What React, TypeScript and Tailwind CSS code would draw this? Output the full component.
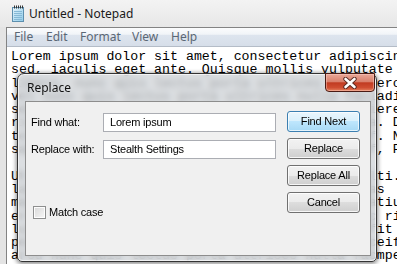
import React from "react";

const MONO = "'Liberation Mono', 'Courier New', monospace";
const SANS = "'Liberation Sans', Arial, sans-serif";
const UI = "'Noto Sans', 'Open Sans', sans-serif";

const FILL =
  "nunc quis lectus porta ultrices nulla facilisi mauris vitae nibh in hac habitasse platea dictumst aliquam erat volutpat ";
const row = (start: string, tail: string) => (start + FILL).slice(0, 46) + tail;

const LINES: string[] = [
  "Lorem ipsum dolor sit amet, consectetur adipiscing elit.",
  "sed, iaculis eget ante. Quisque mollis vulputate erat, nec",
  row("libero, ", "eros vitae"),
  row("vel ", "adipiscing"),
  row("sem ", "ere tincidunt"),
  row("risus ", ". Donec at"),
  row("tellus ", ". Nam in"),
  row("sapien ", ", Proin"),
  "",
  row("Ut ", "ti. Sed"),
  row("lacus ", "s"),
  row("magna ", "tium at"),
  row("eros ", " ri"),
  row("luctus ", "it"),
  row("pede ", "eifend"),
  row("arcu ", "mpeur"),
  row("nisl ", "ore"),
];

function NotepadIcon() {
  return (
    <svg width="14" height="17" viewBox="0 0 14 17">
      <defs>
        <linearGradient id="pg" x1="0" y1="0" x2="1" y2="1">
          <stop offset="0" stopColor="#e4f4fc" />
          <stop offset="1" stopColor="#8fcbe9" />
        </linearGradient>
      </defs>
      <rect x="1.5" y="2.5" width="11" height="14" fill="url(#pg)" stroke="#5d8fae" />
      <line x1="3" y1="6.5" x2="11" y2="6.5" stroke="#86b9d6" />
      <line x1="3" y1="8.5" x2="11" y2="8.5" stroke="#86b9d6" />
      <line x1="3" y1="10.5" x2="11" y2="10.5" stroke="#86b9d6" />
      <line x1="3" y1="12.5" x2="11" y2="12.5" stroke="#86b9d6" />
      <line x1="3" y1="14.5" x2="11" y2="14.5" stroke="#86b9d6" />
      <rect x="3" y="0.5" width="1" height="3" fill="#333" />
      <rect x="5" y="0.5" width="1" height="3" fill="#333" />
      <rect x="7" y="0.5" width="1" height="3" fill="#333" />
      <rect x="9" y="0.5" width="1" height="3" fill="#333" />
      <rect x="11" y="0.5" width="1" height="3" fill="#333" />
    </svg>
  );
}

function Btn({ label, primary }: { label: string; primary?: boolean }) {
  return (
    <div
      className={
        primary
          ? "w-[73px] h-[21px] rounded-[3px] border border-[#3c7fb1] bg-[linear-gradient(to_bottom,#eaf6fd_0%,#d9f0fc_50%,#bee6fd_50%,#a7d9f5_100%)] shadow-[inset_0_0_0_1px_rgba(255,255,255,0.7)] flex items-center justify-center text-[11px] text-black"
          : "w-[73px] h-[21px] rounded-[3px] border border-[#707070] bg-[linear-gradient(to_bottom,#f2f2f2_0%,#ebebeb_50%,#dddddd_50%,#cfcfcf_100%)] shadow-[inset_0_0_0_1px_rgba(255,255,255,0.8)] flex items-center justify-center text-[11px] text-black"
      }
      style={{ fontFamily: SANS, letterSpacing: "-0.2px" }}
    >
      {label}
    </div>
  );
}

export default function App() {
  return (
    <div className="relative w-[397px] h-[264px] overflow-hidden bg-[#e9e9e9]">
      <div className="flex flex-col h-full">
        <div className="h-[27px] shrink-0 flex items-center pl-[11px] gap-[4px] bg-[linear-gradient(to_bottom,#f3f3f3,#e7e7e7)]">
          <NotepadIcon />
          <span className="text-[12px] text-[#1a1a1a]" style={{ fontFamily: UI }}>
            Untitled - Notepad
          </span>
        </div>
        <div className="flex-1 min-h-0 pl-[6px] bg-[#e4e4e4]">
          <div className="h-full border-l border-t border-[#838383] bg-white flex flex-col">
            <div
              className="h-[19px] shrink-0 flex items-center pl-[7px] text-[12px] text-[#5b6775] border-b border-[#b4bcc7] bg-[linear-gradient(to_bottom,#fbfcfd_0%,#f1f4f8_35%,#dde4ee_40%,#d6dee9_100%)]"
              style={{ fontFamily: UI }}
            >
              <span className="w-[32px]">File</span>
              <span className="w-[34px]">Edit</span>
              <span className="w-[52px]">Format</span>
              <span className="w-[39px]">View</span>
              <span>Help</span>
            </div>
            <div
              className="flex-1 min-h-0 overflow-hidden pt-[3px] pl-[4px] text-[13.25px] leading-[13.3px] text-black whitespace-pre"
              style={{ fontFamily: MONO }}
            >
              {LINES.map((l, i) => (
                <div key={i} className="h-[13.3px]">
                  {l}
                </div>
              ))}
            </div>
          </div>
        </div>
      </div>

      {/* Replace dialog */}
      <div className="absolute left-[17px] top-[73px] w-[360px] h-[189px] rounded-t-[7px] rounded-b-[5px] border border-[#343434] bg-[rgba(206,210,215,0.74)] backdrop-blur-[3px] shadow-[0_1px_4px_1px_rgba(0,0,0,0.45),inset_0_0_0_1px_rgba(255,255,255,0.65)] flex flex-col pl-[7px] pr-[5px] pb-[5px]">
        <div className="h-[27px] shrink-0 flex items-center pl-[2px]">
          <span className="text-[12px] text-[#111]" style={{ fontFamily: UI }}>
            Replace
          </span>
        </div>
        <div className="absolute top-[-1px] right-[1px] w-[50px] h-[19px] rounded-b-[4px] border border-[#4a1b14] bg-[linear-gradient(to_bottom,#eaa898_0%,#d9806c_45%,#c13b21_52%,#cf4d31_80%,#e5825f_100%)] shadow-[inset_0_0_0_1px_rgba(255,210,200,0.45)] flex items-center justify-center">
          <svg width="16" height="12" viewBox="0 0 16 12">
            <path d="M3.5 2 L12.5 10 M12.5 2 L3.5 10" stroke="#5a2a22" strokeWidth="4.4" strokeLinecap="round" />
            <path d="M3.5 2 L12.5 10 M12.5 2 L3.5 10" stroke="#ffffff" strokeWidth="2.6" strokeLinecap="round" />
          </svg>
        </div>
        <div className="flex-1 min-h-0 border border-[#8d8d8d] bg-[#f0f0f0] flex" style={{ fontFamily: SANS }}>
          <div className="flex flex-col pl-[5px] pt-[11px] w-[250px]">
            <div className="flex items-center h-[19px]">
              <span className="w-[72px] text-[11px] text-black tracking-[-0.2px]">Find what:</span>
              <div className="w-[173px] h-[19px] border border-[#abadb3] bg-white flex items-center pl-[6px] text-[11px] text-black tracking-[-0.2px]">
                Lorem ipsum
              </div>
            </div>
            <div className="flex items-center h-[19px] mt-[8px]">
              <span className="w-[72px] text-[11px] text-black tracking-[-0.2px]">Replace with:</span>
              <div className="w-[173px] h-[19px] border border-[#abadb3] bg-white flex items-center pl-[6px] text-[11px] text-black tracking-[-0.2px]">
                Stealth Settings
              </div>
            </div>
            <div className="flex items-center gap-[3px] ml-[2px] mt-[47px] h-[13px]">
              <div className="w-[13px] h-[13px] border border-[#8e8f8f] bg-[linear-gradient(to_bottom_right,#d8d8d8,#f7f7f7)] shadow-[inset_0_0_0_1px_rgba(255,255,255,0.9)]" />
              <span className="text-[11px] text-black tracking-[-0.2px]">Match case</span>
            </div>
          </div>
          <div className="flex flex-col gap-[6px] ml-[11px] pt-[9px]">
            <Btn label="Find Next" primary />
            <Btn label="Replace" />
            <Btn label="Replace All" />
            <Btn label="Cancel" />
          </div>
        </div>
      </div>
    </div>
  );
}
